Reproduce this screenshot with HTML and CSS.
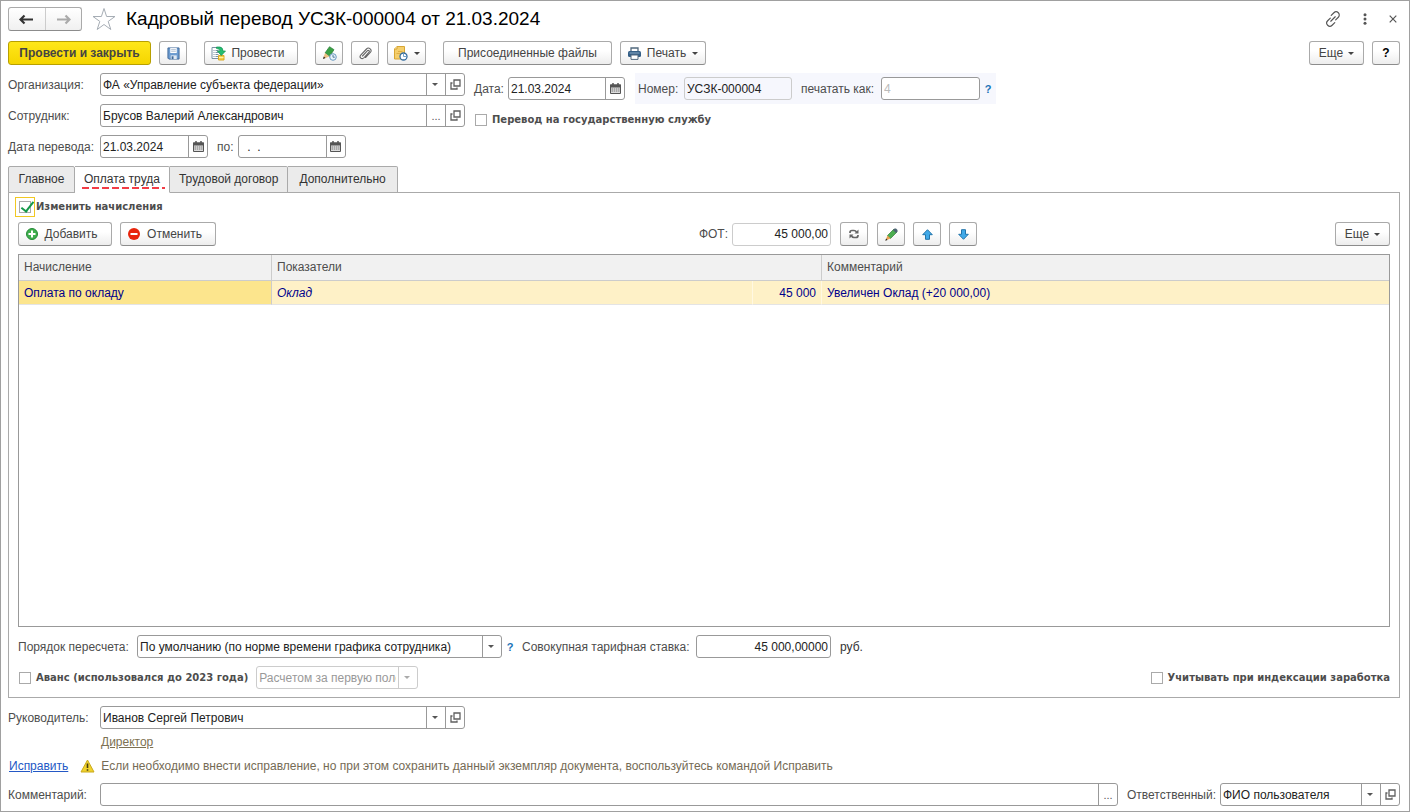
FILE: index.html
```html
<!DOCTYPE html>
<html lang="ru">
<head>
<meta charset="utf-8">
<title>Кадровый перевод УСЗК-000004 от 21.03.2024</title>
<link rel="stylesheet" href="styles.css">
</head>
<body>
<svg class="defs" aria-hidden="true">
  <symbol id="open" viewBox="0 0 11 11"><path d="M4 1h6v6H4zM2.500 4H1v6h6V8.500" fill="none" stroke="#606060" stroke-width="1.300"/></symbol>
  <symbol id="cal" viewBox="0 0 11 11"><path d="M.5 2h10v8.500H.5z" fill="#ddd" stroke="#555"/><path d="M0 1.500h11v3H0z" fill="#555"/><path d="M3 0v3M8 0v3" stroke="#555" stroke-width="1.500"/><path d="M1.500 6h8M1.500 8h8" stroke="#777" stroke-dasharray="1.500 .7"/></symbol>
</svg>
<main class="window">
  <header class="titlebar">
    <div class="nav">
      <button aria-label="Назад"><svg width="15" height="11" viewBox="0 0 15 11"><path d="M5.500 1.500L1.500 5.500l4 4M2 5.500H14" fill="none" stroke="#333" stroke-width="2.200"/></svg></button>
      <button aria-label="Вперед"><svg width="15" height="11" viewBox="0 0 15 11"><path d="M9.500 1.500l4 4-4 4M1 5.500h12" fill="none" stroke="#aaa" stroke-width="2.200"/></svg></button>
    </div>
    <button class="plain" aria-label="В избранное"><svg width="24" height="24" viewBox="0 0 24 24"><path d="M12 1.500l2.600 8H23l-6.800 4.900 2.600 8.100L12 17.500l-6.800 5 2.600-8.100L1 9.500h8.400z" fill="#fff" stroke="#a6adb5"/></svg></button>
    <h1>Кадровый перевод УСЗК-000004 от 21.03.2024</h1>
    <div class="window-tools">
      <button class="plain" aria-label="Ссылка"><svg width="16" height="16" viewBox="0 0 18 18" fill="none" stroke="#555" stroke-width="1.300" stroke-linecap="round"><path d="M7 5l3-3a3.500 3.500 0 0 1 5 5l-3 3M11 13l-3 3a3.500 3.500 0 0 1-5-5l3-3M6.500 11.500l5-5"/></svg></button>
      <button class="plain" aria-label="Меню"><svg width="4" height="12" viewBox="0 0 4 12" fill="#555"><circle cx="2" cy="1.700" r="1.500"/><circle cx="2" cy="6" r="1.500"/><circle cx="2" cy="10.300" r="1.500"/></svg></button>
      <button class="plain" aria-label="Закрыть"><svg width="8" height="8" viewBox="0 0 8 8"><path d="M.7.7l6.600 6.600M7.300.7L.7 7.300" stroke="#555" stroke-width="1.200"/></svg></button>
    </div>
  </header>

  <div class="toolbar">
    <button class="btn primary">Провести и закрыть</button>
    <button class="btn square" aria-label="Записать"><svg width="13" height="13" viewBox="0 0 14 14"><path d="M1 1h12v12H2l-1-1z" fill="#6d9cd0" stroke="#3d6798"/><path d="M3.500 1h7v5.500h-7z" fill="#fff"/><path d="M4.500 2.500h5M4.500 4.500h5" stroke="#a5b7cc"/><path d="M4 9h6.500v4H4z" fill="#dfe8f2"/><path d="M5 10h2v3H5z" fill="#3d6798"/></svg></button>
    <button class="btn post"><svg width="15" height="15" viewBox="0 0 15 15"><path d="M1 1.500h9v11H1z" fill="#fff" stroke="#7b91a3"/><path d="M2.500 4.500h1m1 0h3m-5 2h1m1 0h3m-5 2h1m1 0h3m-5 2h1m1 0h3" stroke="#7b91a3"/><path d="M7.500 9.500h5.500V14H7.500z" fill="#f3cf4b" stroke="#d9aa26"/><path d="M8 11.500h4.500" stroke="#fff1a0"/><path d="M5.500 1h3.500Q12 1.500 12 5h2.500L10.300 9.500 6.300 5H9Q9 2.500 5.500 2.500z" fill="#25bd70" stroke="#139455" stroke-width=".7"/></svg>Провести</button>
    <button class="btn square" aria-label="Подписать"><svg width="15" height="15" viewBox="0 0 15 15"><path d="M3 7L7.500.7l4.500 3L7.500 10.500z" fill="#39a044" stroke="#287b35" stroke-width=".7"/><path d="M1 13l2-6 4.500 3.500z" fill="#edbf82"/><path d="M1 13l.8-2.500L3.500 12z" fill="#222"/><circle cx="11" cy="11" r="3.300" fill="#e8f3fb" stroke="#6b9ac0"/><path d="M11 9v2.200h1.800" fill="none" stroke="#537b9b"/></svg></button>
    <button class="btn square" aria-label="Файлы"><svg width="13" height="13" viewBox="0 0 13 13"><path d="M3.500 9l5-5.300a1 1 0 0 1 1.500 1.500L4.700 11a2 2 0 0 1-3-2.800L7.500 2a2.500 2.500 0 0 1 3.800 3.500L6.500 10.500" fill="none" stroke="#666" stroke-width="1.100" stroke-linecap="round"/></svg></button>
    <button class="btn reminder" aria-label="Напоминание"><svg width="15" height="15" viewBox="0 0 15 15"><path d="M4 .5h7.500v12.500H1.500V3z" fill="#f5cf6c" stroke="#d8a634"/><path d="M4 .5V3H1.500" fill="#fff0bd" stroke="#d8a634"/><path d="M5 5.500h4.500M3.500 7.500h4" stroke="#dfae45"/><circle cx="10.500" cy="10.500" r="3.500" fill="#fff" stroke="#356c9e" stroke-width="1.300"/><path d="M10.500 7.500v3h3" fill="none" stroke="#6fa0cb"/></svg><i class="caret"></i></button>
    <button class="btn attached">Присоединенные файлы</button>
    <button class="btn print"><svg width="13" height="13" viewBox="0 0 13 13"><path d="M3 4V1h7v3" fill="#fff" stroke="#52697e" stroke-width="1.300"/><rect y="4" width="13" height="6" rx="1.500" fill="#345f87"/><path d="M3 8h7v4.400H3z" fill="#fff" stroke="#52697e"/><path d="M1.500 6h10" stroke="#8baac4"/></svg>Печать<i class="caret"></i></button>
    <button class="btn more end">Еще<i class="caret"></i></button>
    <button class="btn square help">?</button>
  </div>

  <div class="details">
    <div class="column">
      <div class="row"><label class="lead" for="org">Организация:</label><div class="field wide"><div class="drop"><select id="org"><option>ФА «Управление субъекта федерации»</option></select></div><button aria-label="Открыть организацию"><svg><use href="#open"/></svg></button></div></div>
      <div class="row"><label class="lead" for="emp">Сотрудник:</label><div class="field wide"><input id="emp" value="Брусов Валерий Александрович"><button aria-label="Выбрать сотрудника" class="dots">...</button><button aria-label="Открыть сотрудника"><svg><use href="#open"/></svg></button></div></div>
      <div class="row"><label class="lead" for="from">Дата перевода:</label><div class="field period"><input id="from" value="21.03.2024"><button aria-label="Календарь"><svg><use href="#cal"/></svg></button></div><label class="to" for="to">по:</label><div class="field period"><input id="to" value="&nbsp; .&nbsp; ."><button aria-label="Календарь"><svg><use href="#cal"/></svg></button></div></div>
    </div>
    <div class="column second">
      <div class="row"><label class="date-label" for="date">Дата:</label><div class="field date"><input id="date" value="21.03.2024"><button aria-label="Календарь"><svg><use href="#cal"/></svg></button></div>
        <div class="number"><label for="num">Номер:</label><div class="field readonly num"><input id="num" value="УСЗК-000004" readonly></div><label class="print-as" for="as">печатать как:</label><div class="field as"><input id="as" placeholder="4"></div><button class="hint" aria-label="Справка">?</button></div></div>
      <label class="check"><input type="checkbox">Перевод на государственную службу</label>
    </div>
  </div>

  <div class="tabs" role="tablist">
    <button role="tab">Главное</button><button role="tab" class="active" aria-selected="true">Оплата труда</button><button role="tab">Трудовой договор</button><button role="tab">Дополнительно</button>
  </div>
  <section class="panel">
    <label class="check change"><span class="focus"><input type="checkbox" checked></span>Изменить начисления</label>
    <div class="commands">
      <button class="btn add"><svg width="12" height="12" viewBox="0 0 12 12"><circle cx="6" cy="6" r="5.500" fill="#3fae4d" stroke="#258a36"/><path d="M6 2.500v7M2.500 6h7" stroke="#fff" stroke-width="2"/></svg>Добавить</button>
      <button class="btn cancel"><svg width="12" height="12" viewBox="0 0 12 12"><circle cx="6" cy="6" r="6" fill="#e8250c"/><path d="M2.500 6h7" stroke="#fff" stroke-width="2"/></svg>Отменить</button>
      <div class="payroll"><label for="fot">ФОТ:</label><div class="field readonly fot"><input id="fot" class="numeric" value="45 000,00" readonly></div>
        <button class="btn square" aria-label="Обновить"><svg width="10" height="10" viewBox="0 0 10 10"><path d="M1 4V3.500Q1 1.500 3 1.500h2q1.500 0 2.500 1.500M9 6v.5Q9 8.500 7 8.500H5Q3.500 8.500 2.500 7" fill="none" stroke="#666" stroke-width="1.700"/><path d="M9.500.5v4h-4zM.5 9.500v-4h4z" fill="#666"/></svg></button>
        <button class="btn square" aria-label="Изменить"><svg width="13" height="13" viewBox="0 0 13 13"><path d="M2.500 7.500L9 1l3 3-6.500 6.500z" fill="#4caf50" stroke="#357d39" stroke-width=".7"/><path d="M8 2l1.500-1.500h1.500L12.500 2v1.500L11 5z" fill="#4d6473"/><path d="M.5 12.500l2-5 3 3z" fill="#e8a04c"/><path d="M.3 12.700l.8-2.200 1.400 1.400z" fill="#222"/></svg></button>
        <button class="btn square" aria-label="Вверх"><svg width="11" height="11" viewBox="0 0 11 11"><path d="M5.500.7l4.800 5H7.500v4.600h-4V5.700H.7z" fill="#40a9e8" stroke="#2274aa" stroke-linejoin="round"/></svg></button>
        <button class="btn square" aria-label="Вниз"><svg width="11" height="11" viewBox="0 0 11 11"><path d="M5.500 10.300l4.800-5H7.500V.7h-4v4.600H.7z" fill="#40a9e8" stroke="#2274aa" stroke-linejoin="round"/></svg></button></div>
      <button class="btn more end">Еще<i class="caret"></i></button>
    </div>
    <div class="grid">
      <table>
        <colgroup><col class="c-name"><col class="c-ind"><col class="c-val"><col></colgroup>
        <thead><tr><th>Начисление</th><th colspan="2">Показатели</th><th>Комментарий</th></tr></thead>
        <tbody><tr><td class="current">Оплата по окладу</td><td><em>Оклад</em></td><td class="value">45 000</td><td>Увеличен Оклад (+20 000,00)</td></tr></tbody>
      </table>
    </div>
    <div class="row recalc">
      <label for="order">Порядок пересчета:</label><div class="field order"><div class="drop"><select id="order"><option>По умолчанию (по норме времени графика сотрудника)</option></select></div></div><button class="hint" aria-label="Справка">?</button>
      <label class="rate-label" for="rate">Совокупная тарифная ставка:</label><div class="field rate"><input id="rate" class="numeric" value="45 000,00000"></div><span class="unit">руб.</span>
    </div>
    <div class="row advance">
      <label class="check"><input type="checkbox">Аванс (использовался до 2023 года)</label>
      <div class="field disabled"><div class="drop"><select disabled aria-label="Расчет аванса"><option>Расчетом за первую половину месяца</option></select></div></div>
      <label class="check end"><input type="checkbox">Учитывать при индексации заработка</label>
    </div>
  </section>

  <footer class="footer">
    <div class="row"><label class="lead" for="head">Руководитель:</label><div class="field wide"><div class="drop"><select id="head"><option>Иванов Сергей Петрович</option></select></div><button aria-label="Открыть руководителя"><svg><use href="#open"/></svg></button></div></div>
    <div class="position"><a href="#head">Директор</a></div>
    <div class="notice"><a href="#fix">Исправить</a><svg width="15" height="14" viewBox="0 0 15 14"><path d="M7.500 1L14 13H1z" fill="#f0d22c" stroke="#c9a91d" stroke-linejoin="round"/><path d="M7.500 4.500v4.500M7.500 10.200v1.600" stroke="#443b12" stroke-width="1.600"/></svg><span>Если необходимо внести исправление, но при этом сохранить данный экземпляр документа, воспользуйтесь командой Исправить</span></div>
    <div class="row"><label class="lead" for="comment">Комментарий:</label><div class="field comment"><input id="comment"><button class="dots" aria-label="Редактировать комментарий">...</button></div><label class="resp-label" for="resp">Ответственный:</label><div class="field resp"><div class="drop"><select id="resp"><option>ФИО пользователя</option></select></div><button aria-label="Открыть ответственного"><svg><use href="#open"/></svg></button></div></div>
  </footer>
</main>
</body>
</html>
```
FILE: styles.css
```css
* { box-sizing: border-box; }
body { margin: 0; background: #fff; color: #4d4d4d; font: 12px/16px "Liberation Sans", Arial, sans-serif; }
button, input, select { font: inherit; color: inherit; margin: 0; }
button { padding: 0; border: 0; background: none; }
svg { display: block; flex: none; }
.defs { position: absolute; width: 0; height: 0; }
.window { min-height: 100vh; display: flex; flex-direction: column; border: 1px solid #a0a0a0; padding: 6px 9px 5px 7px; }

.titlebar { display: flex; align-items: center; height: 24px; }
.nav { display: flex; width: 74px; height: 24px; border: 1px solid #aaa; border-bottom-color: #8c8c8c; border-radius: 3px; background: linear-gradient(#fff, #f0f0f0); }
.nav button { flex: 1; display: grid; place-items: center; }
.nav button + button { border-left: 1px solid #ccc; }
.plain { display: grid; place-items: center; }
.nav + .plain { margin-left: 10px; }
h1 { margin: 0 0 0 10px; font-size: 19px; line-height: 24px; font-weight: 400; color: #000; }
.window-tools { margin-left: auto; display: flex; align-items: center; gap: 22px; padding-right: 3px; }

.toolbar { display: flex; gap: 8px; margin-top: 10px; }
.btn { display: flex; align-items: center; justify-content: center; height: 24px; border: 1px solid #aaa; border-bottom-color: #8c8c8c; border-radius: 3px; background: linear-gradient(#fff 40%, #ededed); color: #444; white-space: nowrap; }
.square { width: 28px; }
.primary { width: 143px; border-color: #b8a000; background: linear-gradient(#ffe71a, #f5d500); font-weight: 700; }
.post { width: 94px; gap: 5px; margin: 0 9px; padding-right: 6px; }
.reminder { width: 39px; gap: 6px; margin-right: 9px; }
.attached { width: 169px; }
.print { width: 86px; gap: 6px; }
.more { width: 55px; gap: 5px; }
.help { font-weight: 700; color: #000; }
.end { margin-left: auto; }
.caret { border: 3px solid transparent; border-top-color: #444; border-bottom: 0; }

.row { display: flex; align-items: center; }
.row > label { flex: none; white-space: nowrap; }
.lead { width: 92px; }
.field { display: flex; height: 23px; border: 1px solid #999; border-radius: 3px; background: #fff; color: #222; }
.field input, .field select { width: 100%; min-width: 0; flex: 1; height: 21px; border: 0; padding: 0 2px; background: none; outline: 0; appearance: none; }
.field button { flex: none; width: 19px; display: grid; place-items: center; border-left: 1px solid #999; color: #555; }
.field button svg { width: 11px; height: 11px; }
.field input.numeric { text-align: right; }
.drop { position: relative; flex: 1; min-width: 0; display: flex; }
.field .drop select { padding-right: 21px; }
.drop::before { content: ""; position: absolute; right: 18px; top: 0; bottom: 0; border-left: 1px solid #999; }
.drop::after { content: ""; position: absolute; right: 7px; top: 9px; border: 3px solid transparent; border-top: 3px solid #555; border-bottom: 0; pointer-events: none; }
.wide { width: 365px; }
.period { width: 108px; }
.readonly { border-color: #ccc; }
.disabled { width: 162px; border-color: #ccc; color: #999; margin-left: 8px; }
.disabled select { opacity: 1; }
.disabled .drop::before { border-color: #ccc; }
.disabled .drop::after { border-top-color: #aaa; }

.details { display: flex; gap: 9px; margin-top: 8px; }
.column { display: flex; flex-direction: column; gap: 8px; }
.to { margin: 0 4px 0 9px; }
.date-label { width: 34px; }
.date { width: 117px; }
.number { display: flex; align-items: center; height: 31px; margin-left: 10px; padding-left: 3px; background: #f6f7fd; }
.number label { width: 46px; }
.num { width: 108px; background: #f6f7fd; }
.number .print-as { width: 80px; margin-left: 9px; }
.as { width: 99px; }
.as input::placeholder { color: #bbb; }
.hint { width: 16px; color: #1a73b8; font-size: 11px; font-weight: 700; }
.check { display: flex; align-items: center; gap: 5px; font-family: "DejaVu Sans", sans-serif; font-size: 10px; font-weight: 700; white-space: nowrap; }
.check input { appearance: none; width: 12px; height: 12px; border: 1px solid #aaa; background: #fff; }
.second .check { padding-left: 1px; }

.tabs { display: flex; margin-top: 8px; height: 27px; margin-bottom: -1px; }
.tabs button { position: relative; min-width: 67px; padding: 0 9px 2px; border: 1px solid #aaa; border-left-width: 0; background: #ebebeb; color: #333; border-radius: 0 2px 0 0; }
.tabs button:first-child { border-left-width: 1px; border-radius: 2px 2px 0 0; }
.tabs button:last-child { padding: 0 11px 2px; }
.tabs .active { background: #fff; border-bottom-color: #fff; }
.tabs .active::after { content: ""; position: absolute; left: 7px; right: 4px; bottom: 3px; height: 2px; background: repeating-linear-gradient(90deg, #f23d46 0 7px, transparent 7px 10px); }

.panel { flex: 1; display: flex; flex-direction: column; border: 1px solid #aaa; padding: 4px 9px 8px; }
.focus { display: grid; place-items: center; width: 20px; height: 20px; border: 1px solid #f1c823; }
.change { align-self: flex-start; gap: 1px; margin-left: -3px; }
.check input:checked { position: relative; }
.check input:checked::after { content: ""; position: absolute; left: 4px; top: -3px; width: 5px; height: 11px; border: solid #14994a; border-width: 0 2px 2px 0; transform: rotate(38deg); }
.commands { display: flex; align-items: center; gap: 8px; margin-top: 5px; }
.add { width: 94px; gap: 6px; padding-right: 6px; }
.cancel { width: 96px; gap: 7px; padding-right: 6px; }
.payroll { display: flex; align-items: center; gap: 8px; margin-left: auto; }
.payroll .fot { width: 99px; margin-left: -4px; }
.fot + .btn { margin: 0 1px; }
.commands .end { margin-left: 350px; }
.grid { flex: 1; margin-top: 8px; border: 1px solid #999; }
table { width: 100%; border-collapse: separate; border-spacing: 0; table-layout: fixed; }
.c-name { width: 253px; }
.c-ind { width: 481px; }
.c-val { width: 69px; }
th, td { padding: 0 5px; text-align: left; font-weight: 400; white-space: nowrap; }
th { height: 26px; padding-bottom: 2px; background: #f1f1f1; border-bottom: 1px solid #ccc; border-right: 1px solid #ccc; }
td { height: 24px; background: #fef1c7; color: #00008b; border-right: 1px solid #fff8e2; border-bottom: 1px solid #e4e4e4; }
th:last-child, td:last-child { border-right: 0; }
td.current { background: #fce58d; border-right-color: #ccc; }
td.value { text-align: right; }
.recalc { margin-top: 8px; }
.recalc > label { width: 119px; }
.order { width: 365px; }
.row > .rate-label { width: 174px; margin-left: 4px; }
.rate { width: 135px; }
.unit { margin-left: 9px; color: #333; }
.advance { margin-top: 8px; }
.advance > .check { padding-left: 1px; }

.footer { margin-top: 8px; }
.position { margin: 5px 0 0 93px; }
.position a { color: #7d7152; }
.notice { display: flex; align-items: center; margin: 8px 0 9px 1px; color: #756b55; }
.notice a { color: #2458c5; }
.notice svg { margin: 0 6px 0 12px; }
.comment { flex: 1; }
.resp-label { width: 93px; margin-left: 9px; }
.resp { width: 180px; }
.dots { font-size: 11px; }
```
